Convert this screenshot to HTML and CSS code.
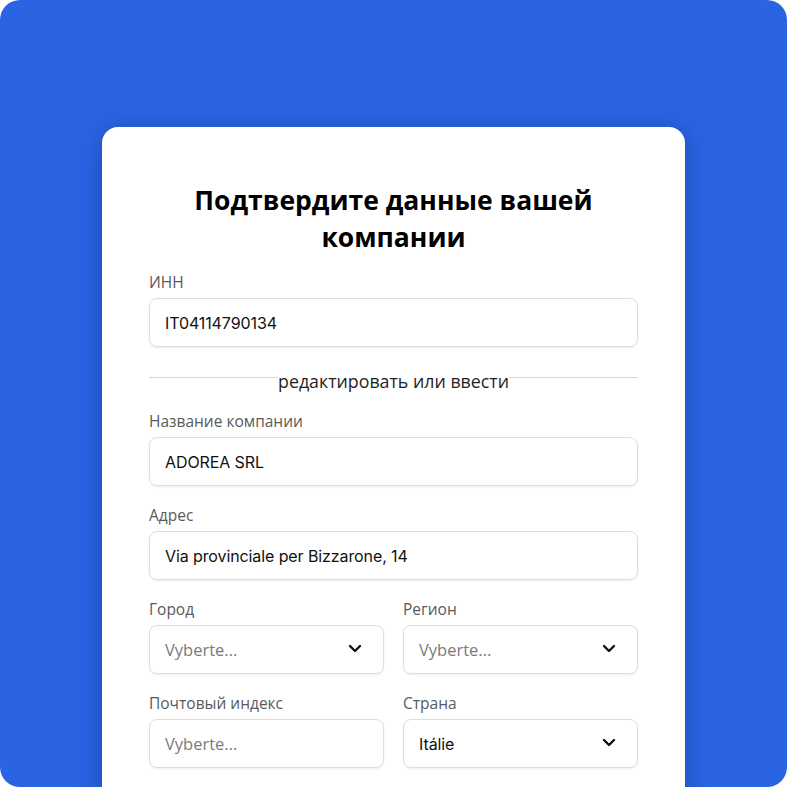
FILE: index.html
```html
<!DOCTYPE html>
<html lang="ru">
<head>
<meta charset="utf-8">
<link rel="stylesheet" href="styles.css">
</head>
<body>
<div class="bg">
  <div class="card">
    <h1 class="title">Подтвердите данные вашей компании</h1>
    <div class="field">
      <label class="label">ИНН</label>
      <div class="input"><span class="value">IT04114790134</span></div>
    </div>
    <div class="divider">
      <span class="line"></span>
      <span class="divider-text">редактировать или ввести</span>
      <span class="line"></span>
    </div>
    <div class="field">
      <label class="label">Название компании</label>
      <div class="input"><span class="value">ADOREA SRL</span></div>
    </div>
    <div class="field">
      <label class="label">Адрес</label>
      <div class="input"><span class="value">Via provinciale per Bizzarone, 14</span></div>
    </div>
    <div class="row">
      <div class="field">
        <label class="label">Город</label>
        <div class="input select"><span class="placeholder">Vyberte...</span>
          <svg class="chev" width="14" height="9" viewBox="0 0 14 9"><path d="M2 2l5 5 5-5" fill="none" stroke="#111" stroke-width="2.4" stroke-linecap="round" stroke-linejoin="round"/></svg>
        </div>
      </div>
      <div class="field">
        <label class="label">Регион</label>
        <div class="input select"><span class="placeholder">Vyberte...</span>
          <svg class="chev" width="14" height="9" viewBox="0 0 14 9"><path d="M2 2l5 5 5-5" fill="none" stroke="#111" stroke-width="2.4" stroke-linecap="round" stroke-linejoin="round"/></svg>
        </div>
      </div>
    </div>
    <div class="row">
      <div class="field">
        <label class="label">Почтовый индекс</label>
        <div class="input"><span class="placeholder">Vyberte...</span></div>
      </div>
      <div class="field">
        <label class="label">Страна</label>
        <div class="input select"><span class="value">Itálie</span>
          <svg class="chev" width="14" height="9" viewBox="0 0 14 9"><path d="M2 2l5 5 5-5" fill="none" stroke="#111" stroke-width="2.4" stroke-linecap="round" stroke-linejoin="round"/></svg>
        </div>
      </div>
    </div>
  </div>
</div>
</body>
</html>
```

FILE: styles.css
```css
html, body {
  margin: 0;
  padding: 0;
  background: #ffffff;
}
body {
  width: 788px;
  height: 788px;
  overflow: hidden;
  font-family: "Open Sans", "Noto Sans", sans-serif;
}
.bg {
  width: 787px;
  height: 787px;
  background: #2a64e2;
  border-radius: 20px;
  overflow: hidden;
  box-sizing: border-box;
  padding: 127px 0 0 102px;
}
.card {
  width: 583px;
  height: 700px;
  background: #ffffff;
  border-radius: 16px;
  box-shadow: 0 4px 24px rgba(10, 30, 90, 0.35);
  box-sizing: border-box;
  padding: 55px 47px 0 47px;
  display: flex;
  flex-direction: column;
}
.title {
  margin: 0 0 16px 0;
  font-size: 26.5px;
  line-height: 37px;
  font-weight: 700;
  text-align: center;
  color: #000;
  padding: 0 30px;
}
.field {
  display: flex;
  flex-direction: column;
  margin-bottom: 19px;
  flex: none;
}
.row .field {
  flex: 1 1 0;
  min-width: 0;
}
.label {
  font-size: 15.5px;
  line-height: 20px;
  color: #5a5a5a;
  margin-bottom: 6px;
}
.input {
  height: 49px;
  box-sizing: border-box;
  border: 1px solid #dedede;
  border-radius: 8px;
  box-shadow: 0 1px 2px rgba(0, 0, 0, 0.08);
  display: flex;
  align-items: center;
  padding: 0 21px 0 15px;
}
.select {
  justify-content: space-between;
}
.value {
  font-family: Inter, "Liberation Sans", sans-serif;
  font-size: 16px;
  color: #111;
  letter-spacing: -0.1px;
}
.placeholder {
  font-size: 16.5px;
  color: #7a7a7a;
}
.chev {
  margin-top: -2px;
}
.divider {
  display: flex;
  align-items: flex-start;
  margin: 3px 0 18px 0;
  height: 24px;
  flex: none;
}
.line {
  flex: 1;
  height: 1px;
  background: #d6d6d6;
  margin-top: 8px;
}
.divider-text {
  font-size: 17.8px;
  line-height: 24px;
  color: #1f1f1f;
}
.row {
  display: flex;
  gap: 19px;
  flex: none;
}
```
